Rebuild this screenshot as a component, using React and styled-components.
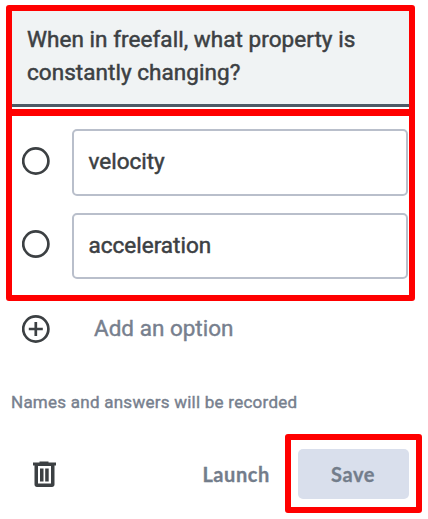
import React from 'react';
import styled, { createGlobalStyle } from 'styled-components';

const PageStyle = createGlobalStyle`
  *, *::before, *::after { box-sizing: border-box; }
  body { margin: 0; background: #fff; font-family: Roboto, Arial, sans-serif; }
`;

const Card = styled.main`
  display: flex;
  flex-direction: column;
  width: 428px;
  height: 519px;
  padding: 5px 5px 0 6px;
  overflow: hidden;
  color: #3c4043;
`;

const Highlight = styled.section`
  width: 409px;
  border: 6px solid #ff0000;
  border-radius: 3px;
`;

const QuestionFrame = styled(Highlight)`
  height: 111px;
  border-width: 6px 6px 7px;
  padding-bottom: 2px;
`;

const OptionsFrame = styled(Highlight)`
  display: flex;
  flex-direction: column;
  gap: 17px;
  height: 192px;
  margin-top: -7px;
  border-top-width: 7px;
  padding: 13px 0 0 10px;
`;

const Question = styled.h1`
  height: 96px;
  margin: 0;
  padding: 12px 0 0 15px;
  background: #f0f3f4;
  border-bottom: 3px solid #4e5a66;
  font-size: 22.5px;
  font-weight: 400;
  line-height: 33px;
  letter-spacing: 0.05px;
  -webkit-text-stroke: 0.5px currentColor;
`;

const OptionRow = styled.label`
  display: flex;
  align-items: center;
  gap: 22px;
`;

const Field = styled.span`
  width: 336px;
  height: 66.5px;
  padding-left: 14.5px;
  border: 2px solid #b9bfcb;
  border-radius: 5px;
  font-size: 22.5px;
  font-weight: 400;
  line-height: 61px;
  letter-spacing: 0;
  -webkit-text-stroke: 0.5px currentColor;
`;

const Glyph = styled.svg`
  display: block;
  flex: none;
`;

const RadioSlot = styled.span`
  padding-bottom: 3px;
`;

const AddRow = styled.div`
  display: flex;
  align-items: center;
  gap: 44px;
  height: 32px;
  margin-top: 12px;
  padding-left: 16px;
`;

const AddLabel = styled.span`
  padding-bottom: 2px;
  color: #77808e;
  font-size: 22.5px;
  font-weight: 400;
  line-height: 30px;
  -webkit-text-stroke: 0.4px currentColor;
`;

const Notice = styled.p`
  margin: 45px 0 0 5px;
  color: #77808e;
  font-size: 17px;
  font-weight: 400;
  line-height: 24px;
  letter-spacing: 0.25px;
  -webkit-text-stroke: 0.4px currentColor;
`;

const Actions = styled.footer`
  display: flex;
  align-items: center;
  height: 79px;
  margin-top: 20px;
  padding-left: 24px;
`;

const ActionButton = styled.button`
  padding: 0;
  border: 0;
  background: none;
  color: #737d8b;
  font: 700 20px/26px Lato, sans-serif;
  letter-spacing: 0.6px;
  -webkit-text-stroke: 0.3px currentColor;
`;

const Launch = styled(ActionButton)`
  margin: 0 15px 0 auto;
`;

const SaveFrame = styled.div`
  width: 137px;
  height: 79px;
  margin-right: 1px;
  padding: 9px 7px 9px 6.5px;
  border: 6px solid #ff0000;
  border-radius: 3px;
`;

const Save = styled(ActionButton)`
  display: block;
  width: 111px;
  height: 50px;
  border-radius: 5px;
  background: #d9dfec;
`;

function CircleIcon({ plus }) {
  return (
    <Glyph width="28" height="28" viewBox="0 0 28 28" fill="none" stroke="#3c4043" strokeWidth="2.7">
      <circle cx="13.8" cy="14" r="12.6" />
      {plus && <path d="M13.8 7v14M6.8 14h14" />}
    </Glyph>
  );
}

function TrashIcon() {
  return (
    <Glyph width="28" height="28" viewBox="0 0 28 28" fill="#3c4043">
      <path d="M9.5 1.5h9V2.5H26v3h-1.5V24.5c0 1.500-1 2.500-2.500 2.500h-15C5.500 27 4.500 26 4.500 24.500V5.500H3v-3h6.500zM8 6v17.500h13V6z" fillRule="evenodd" />
      <path d="M10 8.500h3.500v13H10zM15.200 8.500h3.500v13H15.200z" />
    </Glyph>
  );
}

export default function App() {
  return (
    <>
      <PageStyle />
      <Card>
        <QuestionFrame>
          <Question>When in freefall, what property is<br />constantly changing?</Question>
        </QuestionFrame>
        <OptionsFrame>
          {['velocity', 'acceleration'].map((option) => (
            <OptionRow key={option}>
              <RadioSlot><CircleIcon /></RadioSlot>
              <Field>{option}</Field>
            </OptionRow>
          ))}
        </OptionsFrame>
        <AddRow>
          <CircleIcon plus />
          <AddLabel>Add an option</AddLabel>
        </AddRow>
        <Notice>Names and answers will be recorded</Notice>
        <Actions>
          <TrashIcon />
          <Launch>Launch</Launch>
          <SaveFrame><Save>Save</Save></SaveFrame>
        </Actions>
      </Card>
    </>
  );
}
